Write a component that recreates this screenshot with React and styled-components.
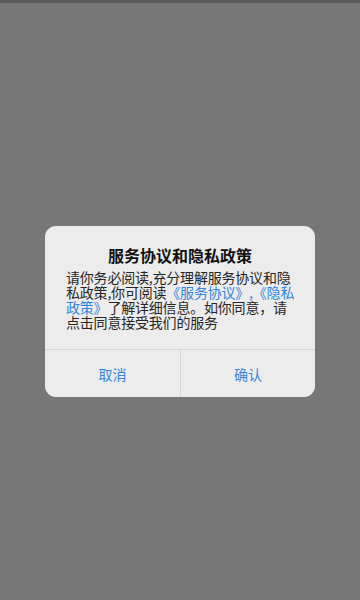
import React from "react";
import styled, { createGlobalStyle } from "styled-components";

const Global = createGlobalStyle`
  html, body { margin: 0; padding: 0; }
  body { font-family: "Noto Sans CJK SC", "Noto Sans", sans-serif; }
`;

const Screen = styled.div`
  width: 360px;
  height: 600px;
  background: #777777;
  display: flex;
  flex-direction: column;
`;

const StatusBar = styled.div`
  height: 3px;
  background: #5a5a5a;
  flex: none;
`;

const Center = styled.div`
  flex: 1;
  display: flex;
  justify-content: center;
  padding-top: 223px;
`;

const Dialog = styled.div`
  width: 270px;
  height: 171px;
  background: #ececec;
  border-radius: 11px;
  display: flex;
  flex-direction: column;
  overflow: hidden;
`;

const Content = styled.div`
  padding: 19px 0 0 21px;
  height: 104px;
  border-bottom: 1px solid #d6d6d6;
`;

const Title = styled.div`
  font-size: 16px;
  font-weight: 700;
  color: #111;
  text-align: center;
  margin-left: -21px;
  line-height: 20px;
  margin-bottom: 5px;
`;

const Body = styled.div`
  font-size: 14px;
  line-height: 15px;
  color: #262626;
  white-space: nowrap;
  letter-spacing: -0.2px;
`;

const Link = styled.span`
  color: #3285dd;
`;

const Actions = styled.div`
  flex: 1;
  display: grid;
  grid-template-columns: 1fr 1fr;
`;

const Action = styled.div`
  display: flex;
  align-items: center;
  justify-content: center;
  font-size: 14px;
  color: #3584dc;
  & + & { border-left: 1px solid #d6d6d6; }
`;

export default function App() {
  return (
    <Screen>
      <Global />
      <StatusBar />
      <Center>
        <Dialog>
          <Content>
            <Title>服务协议和隐私政策</Title>
            <Body>
              请你务必阅读,充分理解服务协议和隐
              <br />
              私政策,你可阅读<Link>《服务协议》,《隐私</Link>
              <br />
              <Link>政策》</Link>了解详细信息。如你同意，请
              <br />
              点击同意接受我们的服务
            </Body>
          </Content>
          <Actions>
            <Action>取消</Action>
            <Action>确认</Action>
          </Actions>
        </Dialog>
      </Center>
    </Screen>
  );
}
